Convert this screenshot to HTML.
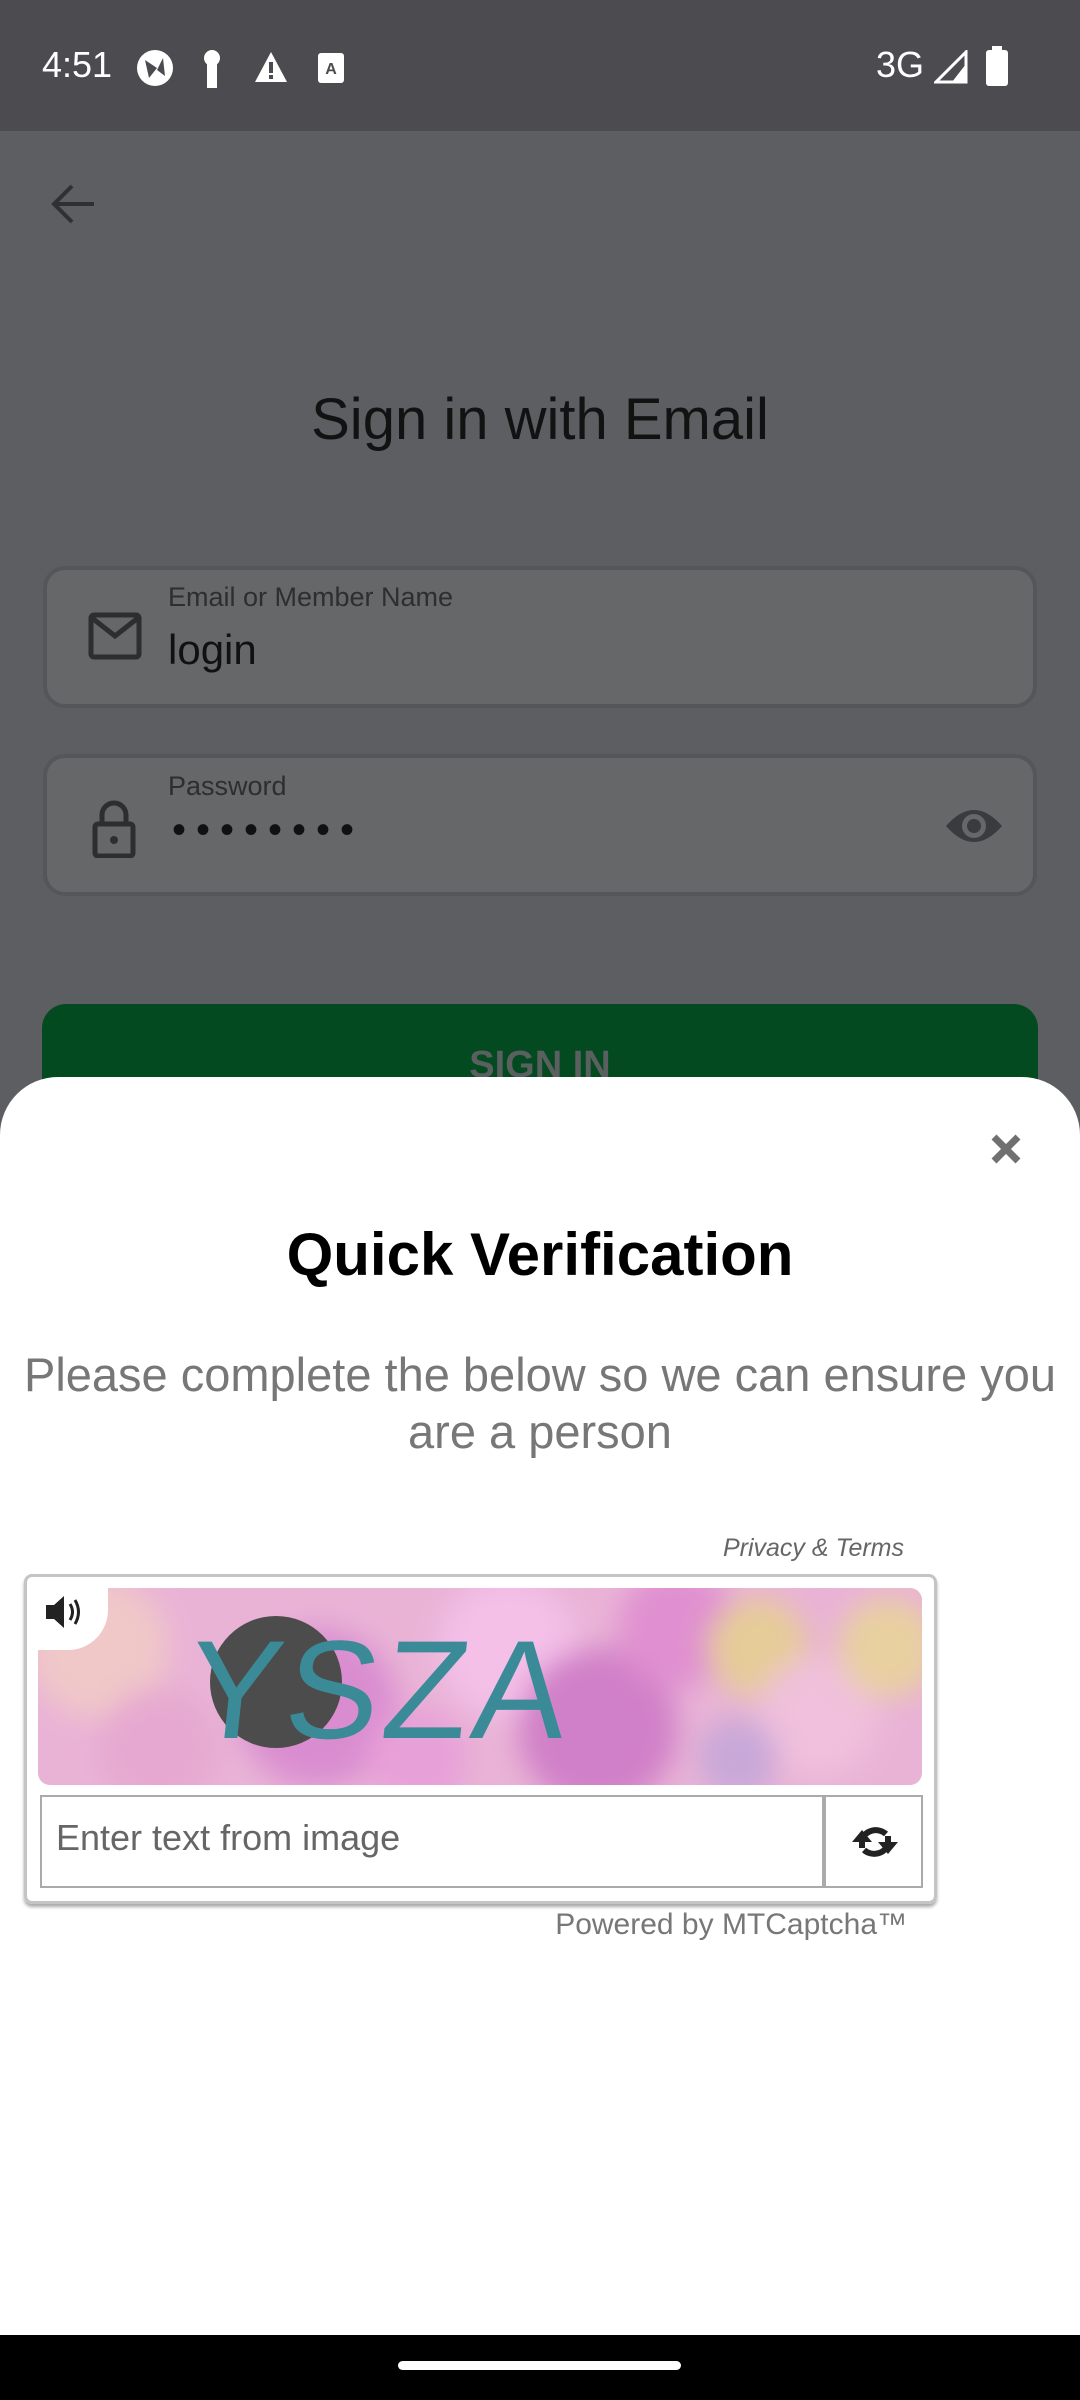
<!DOCTYPE html>
<html><head><meta charset="utf-8"><style>
*{margin:0;padding:0;box-sizing:border-box}
body{width:1080px;height:2400px;position:relative;overflow:hidden;background:#5d5e62;font-family:"Liberation Sans",Roboto,sans-serif}
.abs{position:absolute}
.field{position:absolute;left:43px;width:994px;height:142px;background:#666769;border:4px solid #555659;border-radius:22px}
.lbl{position:absolute;left:168px;font-size:27px;color:#2e2e30}
</style></head><body>
<div class="abs" style="left:0;top:0;width:1080px;height:131px;background:#4c4c50"></div>
<div class="abs" style="left:42px;top:44px;color:#fff;font-size:36px">4:51</div>
<svg class="abs" style="left:135px;top:48px" width="40" height="40" viewBox="0 0 40 40"><circle cx="20" cy="20" r="18" fill="#fff"/><path d="M10 12 L22 20 L14 30 Z M28 10 L22 22 L30 28Z" fill="#4c4c50"/></svg>
<svg class="abs" style="left:200px;top:48px" width="24" height="40"><circle cx="12" cy="10" r="8" fill="#fff"/><rect x="7" y="12" width="10" height="28" fill="#fff"/></svg>
<svg class="abs" style="left:254px;top:50px" width="34" height="34"><path d="M17 2 L33 32 H1Z" fill="#fff"/><rect x="15" y="12" width="4" height="11" fill="#4c4c50"/><rect x="15" y="25" width="4" height="4" fill="#4c4c50"/></svg>
<svg class="abs" style="left:318px;top:53px" width="26" height="30"><rect width="26" height="30" rx="3" fill="#fff"/><text x="13" y="21" font-size="16" text-anchor="middle" fill="#4c4c50" font-family="Liberation Sans" font-weight="bold">A</text></svg>
<div class="abs" style="left:876px;top:44px;color:#fff;font-size:36px">3G</div>
<svg class="abs" style="left:934px;top:50px" width="34" height="34"><path d="M32 2 V32 H2Z" fill="none" stroke="#fff" stroke-width="3"/><path d="M32 14 V32 H18Z" fill="#fff"/></svg>
<svg class="abs" style="left:986px;top:46px" width="22" height="40"><rect x="6" y="0" width="10" height="5" fill="#fff"/><rect x="0" y="4" width="22" height="36" rx="3" fill="#fff"/></svg>

<svg class="abs" style="left:48px;top:182px" width="50" height="44"><path d="M46 22 H6 M24 4 L6 22 L24 40" fill="none" stroke="#2f3034" stroke-width="4"/></svg>
<div class="abs" style="left:0;width:1080px;top:386px;text-align:center;font-size:58px;color:#121212">Sign in with Email</div>

<div class="field" style="top:566px"></div>
<svg class="abs" style="left:88px;top:612px" width="54" height="48"><rect x="3" y="3" width="48" height="42" rx="3" fill="none" stroke="#2e2e30" stroke-width="5"/><path d="M4 6 L27 24 L50 6" fill="none" stroke="#2e2e30" stroke-width="5"/></svg>
<div class="lbl" style="top:582px">Email or Member Name</div>
<div class="abs" style="left:168px;top:626px;font-size:42px;color:#111">login</div>

<div class="field" style="top:754px"></div>
<svg class="abs" style="left:92px;top:800px" width="44" height="58"><path d="M10 24 V15 a12 12 0 0 1 24 0 V24" fill="none" stroke="#2e2e30" stroke-width="5"/><rect x="3" y="24" width="38" height="32" rx="3" fill="none" stroke="#2e2e30" stroke-width="5"/><circle cx="22" cy="40" r="4" fill="#2e2e30"/></svg>
<div class="lbl" style="top:771px">Password</div>
<div class="abs" style="left:172px;top:808px;font-size:40px;color:#111;letter-spacing:10px">••••••••</div>
<svg class="abs" style="left:944px;top:804px" width="60" height="44"><path d="M2 22 Q30 -10 58 22 Q30 54 2 22Z" fill="#3a3b3e"/><circle cx="30" cy="22" r="12" fill="#666769"/><circle cx="30" cy="22" r="7" fill="#3a3b3e"/></svg>

<div class="abs" style="left:42px;top:1004px;width:996px;height:120px;background:#044a20;border-radius:24px;text-align:center;color:#5a5f60;font-size:38px;font-weight:bold;padding-top:40px">SIGN IN</div>

<div class="abs" style="left:0;top:1077px;width:1080px;height:1260px;background:#fff;border-radius:58px 58px 0 0"></div>
<svg class="abs" style="left:990px;top:1133px" width="32" height="32"><path d="M4 4 L28 28 M28 4 L4 28" stroke="#707070" stroke-width="7"/></svg>
<div class="abs" style="left:0;width:1080px;top:1220px;text-align:center;font-size:60px;font-weight:bold;color:#000">Quick Verification</div>
<div class="abs" style="left:0;width:1080px;top:1346px;text-align:center;font-size:47px;color:#777;line-height:57px">Please complete the below so we can ensure you are a person</div>

<div class="abs" style="left:0;width:904px;top:1534px;text-align:right;font-size:25px;font-style:italic;color:#666">Privacy &amp; Terms</div>
<div class="abs" style="left:24px;top:1574px;width:913px;height:330px;border:3px solid #c4c4c4;border-radius:8px;box-shadow:0 3px 3px #aaa"></div>
<svg class="abs" style="left:38px;top:1588px" width="884" height="197" viewBox="0 0 884 197">
<defs><filter id="b"><feGaussianBlur stdDeviation="14"/></filter><clipPath id="c"><rect width="884" height="197" rx="12"/></clipPath></defs>
<g clip-path="url(#c)">
<rect width="884" height="197" fill="#e9b3d6"/>
<g filter="url(#b)">
<circle cx="60" cy="60" r="70" fill="#f0c8c8"/><circle cx="120" cy="160" r="60" fill="#e6a8d0"/><circle cx="280" cy="120" r="80" fill="#d98dd0"/><circle cx="470" cy="60" r="70" fill="#f4c0e8"/><circle cx="560" cy="140" r="80" fill="#d080c8"/><circle cx="640" cy="40" r="60" fill="#e090d0"/><circle cx="720" cy="60" r="50" fill="#e6cc98"/><circle cx="780" cy="130" r="60" fill="#f0c0dc"/><circle cx="850" cy="60" r="50" fill="#e8d0a0"/><circle cx="380" cy="170" r="50" fill="#e8a0d8"/><circle cx="700" cy="170" r="40" fill="#c8a8d8"/>
</g>
<circle cx="238" cy="94" r="66" fill="#4c4c4c"/>
<text x="150" y="150" font-size="140" font-family="Liberation Sans Narrow, Liberation Sans" fill="#3a8a98" letter-spacing="4" transform="skewX(-6) translate(12,0)">YSZA</text>
</g></svg>
<div class="abs" style="left:38px;top:1588px;width:70px;height:62px;background:#fff;border-radius:0 0 40px 0"></div>
<svg class="abs" style="left:44px;top:1592px" width="46" height="40"><path d="M2 13 H10 L20 4 V36 L10 27 H2Z" fill="#222"/><path d="M26 12 Q31 20 26 28 M31 8 Q38 20 31 32" fill="none" stroke="#222" stroke-width="3"/></svg>
<div class="abs" style="left:40px;top:1795px;width:784px;height:93px;border:2px solid #aaa;font-size:36px;color:#666;padding:20px 14px">Enter text from image</div>
<div class="abs" style="left:824px;top:1795px;width:99px;height:93px;border:2px solid #aaa"></div>
<svg class="abs" style="left:850px;top:1818px" width="50" height="48"><path d="M12 30 V22 a14 12 0 0 1 24 -6" fill="none" stroke="#222" stroke-width="6"/><path d="M2 24 L12 12 L22 24Z" fill="#222"/><path d="M38 18 V26 a14 12 0 0 1 -24 6" fill="none" stroke="#222" stroke-width="6"/><path d="M48 24 L38 36 L28 24Z" fill="#222"/></svg>
<div class="abs" style="left:0;width:907px;top:1908px;text-align:right;font-size:30px;color:#777">Powered by MTCaptcha™</div>

<div class="abs" style="left:0;top:2335px;width:1080px;height:65px;background:#000"></div>
<div class="abs" style="left:398px;top:2361px;width:283px;height:9px;border-radius:5px;background:#fff"></div>
</body></html>
